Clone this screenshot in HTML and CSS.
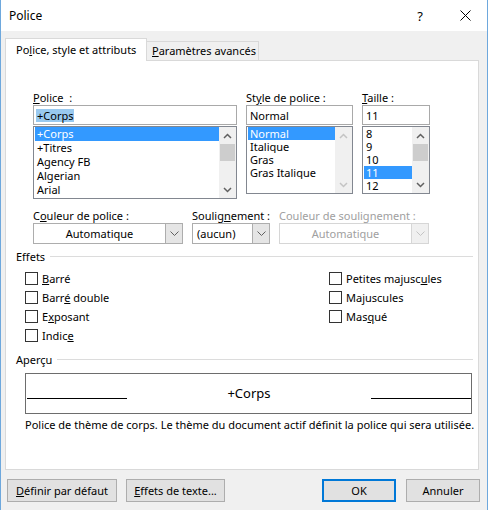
FILE: index.html
```html
<!DOCTYPE html>
<html lang="fr">
<head>
<meta charset="utf-8">
<title>Police</title>
<link rel="stylesheet" href="styles.css">
</head>
<body>
<div class="window">
  <div class="titlebar">
    <span class="title">Police</span>
    <span class="help">?</span>
    <span class="close"><svg width="11" height="11" viewBox="0 0 11 11"><path d="M0.5 0.5 L10.5 10.5 M10.5 0.5 L0.5 10.5" stroke="#000" stroke-width="1" fill="none"/></svg></span>
  </div>
  <div class="client">
    <div class="tabs">
      <div class="tab active">Po<u>l</u>ice, style et attributs</div>
      <div class="tab plain"><u>P</u>aramètres avancés</div>
    </div>
    <div class="panel">
      <div class="fontgrid">
        <div class="col">
          <span class="lbl"><u>P</u>olice&nbsp;&nbsp;:</span>
          <div class="input"><span class="hl">+Corps</span></div>
          <div class="list tall">
            <div class="items">
              <div class="item sel">+Corps</div>
              <div class="item">+Titres</div>
              <div class="item">Agency FB</div>
              <div class="item">Algerian</div>
              <div class="item">Arial</div>
            </div>
            <div class="scrollbar">
              <div class="sb-btn"><svg width="9" height="6" viewBox="0 0 9 6"><path d="M1 5 L4.5 1.5 L8 5" stroke="#606060" stroke-width="1.5" fill="none"/></svg></div>
              <div class="thumb"></div>
              <div class="track"></div>
              <div class="sb-btn"><svg width="9" height="6" viewBox="0 0 9 6"><path d="M1 1 L4.5 4.5 L8 1" stroke="#606060" stroke-width="1.5" fill="none"/></svg></div>
            </div>
          </div>
        </div>
        <div class="col">
          <span class="lbl">St<u>y</u>le de police :</span>
          <div class="input"><span class="txt">Normal</span></div>
          <div class="list small">
            <div class="items">
              <div class="item sel">Normal</div>
              <div class="item">Italique</div>
              <div class="item">Gras</div>
              <div class="item">Gras Italique</div>
            </div>
            <div class="scrollbar disabled">
              <div class="sb-btn"><svg width="9" height="6" viewBox="0 0 9 6"><path d="M1 5 L4.5 1.5 L8 5" stroke="#c4c4c4" stroke-width="1.5" fill="none"/></svg></div>
              <div class="track"></div>
              <div class="sb-btn"><svg width="9" height="6" viewBox="0 0 9 6"><path d="M1 1 L4.5 4.5 L8 1" stroke="#c4c4c4" stroke-width="1.5" fill="none"/></svg></div>
            </div>
          </div>
        </div>
        <div class="col">
          <span class="lbl"><u>T</u>aille :</span>
          <div class="input"><span class="txt">11</span></div>
          <div class="list small">
            <div class="items">
              <div class="item">8</div>
              <div class="item">9</div>
              <div class="item">10</div>
              <div class="item sel">11</div>
              <div class="item">12</div>
            </div>
            <div class="scrollbar">
              <div class="sb-btn"><svg width="9" height="6" viewBox="0 0 9 6"><path d="M1 5 L4.5 1.5 L8 5" stroke="#606060" stroke-width="1.5" fill="none"/></svg></div>
              <div class="thumb"></div>
              <div class="track"></div>
              <div class="sb-btn"><svg width="9" height="6" viewBox="0 0 9 6"><path d="M1 1 L4.5 4.5 L8 1" stroke="#606060" stroke-width="1.5" fill="none"/></svg></div>
            </div>
          </div>
        </div>
      </div>

      <div class="selects">
        <div class="col">
          <span class="lbl">C<u>o</u>uleur de police :</span>
          <div class="dd">
            <span class="dd-val">Automatique</span>
            <span class="dd-btn"><svg width="9" height="5" viewBox="0 0 9 5"><path d="M0.5 0.5 L4.5 4.5 L8.5 0.5" stroke="#606060" stroke-width="1" fill="none"/></svg></span>
          </div>
        </div>
        <div class="col">
          <span class="lbl">Soulig<u>n</u>ement :</span>
          <div class="dd left">
            <span class="dd-val">(aucun)</span>
            <span class="dd-btn"><svg width="9" height="5" viewBox="0 0 9 5"><path d="M0.5 0.5 L4.5 4.5 L8.5 0.5" stroke="#606060" stroke-width="1" fill="none"/></svg></span>
          </div>
        </div>
        <div class="col">
          <span class="lbl dim">Couleur de soulignement :</span>
          <div class="dd dis">
            <span class="dd-val">Automatique</span>
            <span class="dd-btn"><svg width="9" height="5" viewBox="0 0 9 5"><path d="M0.5 0.5 L4.5 4.5 L8.5 0.5" stroke="#c4c4c4" stroke-width="1" fill="none"/></svg></span>
          </div>
        </div>
      </div>

      <div class="ghead"><span>Effets</span><span class="rule"></span></div>
      <div class="effects">
        <div class="ecol left">
          <div class="cb"><span class="box"></span><span><u>B</u>arré</span></div>
          <div class="cb"><span class="box"></span><span>Barr<u>é</u> double</span></div>
          <div class="cb"><span class="box"></span><span>E<u>x</u>posant</span></div>
          <div class="cb"><span class="box"></span><span>Indic<u>e</u></span></div>
        </div>
        <div class="ecol">
          <div class="cb"><span class="box"></span><span>Petites majusc<u>u</u>les</span></div>
          <div class="cb"><span class="box"></span><span>Ma<u>j</u>uscules</span></div>
          <div class="cb"><span class="box"></span><span>Mas<u>q</u>ué</span></div>
        </div>
      </div>

      <div class="ghead second"><span>Aperçu</span><span class="rule"></span></div>
      <div class="preview">
        <span class="pline"></span>
        <span class="ptext">+Corps</span>
        <span class="pline"></span>
      </div>
      <p class="desc">Police de thème de corps. Le thème du document actif définit la police qui sera utilisée.</p>
    </div>

    <div class="buttons">
      <button class="btn b1"><u>D</u>éfinir par défaut</button>
      <button class="btn b2"><u>E</u>ffets de texte...</button>
      <button class="btn ok">OK</button>
      <button class="btn cancel">Annuler</button>
    </div>
  </div>
</div>
</body>
</html>
```
FILE: styles.css
```css
html, body {
  margin: 0;
  padding: 0;
}
body {
  width: 488px;
  height: 510px;
  overflow: hidden;
  font-family: "Noto Sans", "Open Sans", sans-serif;
  font-size: 11px;
  color: #000;
  background: #fff;
}
u {
  text-decoration: underline;
  text-underline-offset: 1px;
}
.window {
  height: 510px;
  box-sizing: border-box;
  border-left: 1px solid #6ea8dd;
  border-right: 1px solid #6ea8dd;
  display: flex;
  flex-direction: column;
}
.titlebar {
  height: 31px;
  flex: none;
  background: #fff;
  display: flex;
  align-items: center;
}
.title {
  margin-left: 8px;
  font-size: 12px;
}
.help {
  margin-left: auto;
  width: 46px;
  text-align: center;
  font-size: 13px;
}
.close {
  width: 44px;
  display: flex;
  justify-content: center;
  align-items: center;
}
.client {
  flex: 1;
  background: #f0f0f0;
  padding: 7px 8px 0 4px;
}
.tabs {
  display: flex;
  height: 22px;
  align-items: flex-start;
}
.tab {
  box-sizing: border-box;
  border: 1px solid #d9d9d9;
  border-bottom: none;
  white-space: nowrap;
}
.tab.active {
  position: relative;
  z-index: 1;
  width: 142px;
  height: 23px;
  background: #fff;
  padding-left: 10px;
  line-height: 22px;
}
.tab.plain {
  width: 112px;
  height: 19px;
  margin-top: 3px;
  border-left: none;
  background: #f0f0f0;
  padding-left: 5px;
  line-height: 18px;
}
.panel {
  height: 410px;
  box-sizing: border-box;
  border: 1px solid #d9d9d9;
  background: #fff;
  padding: 29px 5px 0 10px;
}
.fontgrid {
  display: grid;
  grid-template-columns: 204px 107px 68px;
  column-gap: 9px;
  margin-left: 17px;
  align-items: start;
}
.col {
  display: flex;
  flex-direction: column;
}
.lbl {
  display: block;
  height: 15px;
  line-height: 15px;
  white-space: nowrap;
}
.lbl.dim {
  color: #a0a0a0;
}
.input {
  height: 20px;
  box-sizing: border-box;
  border: 1px solid #a9a9a9;
  padding-left: 2px;
  display: flex;
  align-items: center;
}
.input .hl {
  background: #99c9ef;
  padding: 0 1px;
  line-height: 13px;
}
.input .txt {
  padding-left: 1px;
}
.list {
  margin-top: 1px;
  height: 68px;
  box-sizing: border-box;
  border: 1px solid #828790;
  display: flex;
  background: #fff;
}
.list.tall {
  height: 73px;
}
.items {
  flex: 1;
  padding-left: 1px;
  overflow: hidden;
}
.item {
  height: 14px;
  line-height: 14px;
  padding-left: 2px;
  white-space: nowrap;
  overflow: hidden;
}
.list.small .item {
  height: 13px;
  line-height: 13px;
}
.item.sel {
  background: #3399ff;
  color: #fff;
}
.scrollbar {
  width: 17px;
  flex: none;
  background: #f0f0f0;
  display: flex;
  flex-direction: column;
}
.sb-btn {
  height: 17px;
  flex: none;
  display: flex;
  align-items: center;
  justify-content: center;
}
.thumb {
  height: 17px;
  flex: none;
  margin: 0 1px;
  background: #cdcdcd;
}
.track {
  flex: 1;
}
.selects {
  display: grid;
  grid-template-columns: 150px 78px 150px;
  column-gap: 9px;
  margin: 9px 0 0 17px;
}
.dd {
  height: 21px;
  box-sizing: border-box;
  border: 1px solid #adadad;
  background: #fff;
  display: flex;
}
.dd-val {
  flex: 1;
  text-align: center;
  line-height: 19px;
  white-space: nowrap;
}
.dd.left .dd-val {
  text-align: left;
  padding-left: 4px;
}
.dd-btn {
  width: 16px;
  flex: none;
  border-left: 1px solid #adadad;
  background: #e5e5e5;
  display: flex;
  align-items: center;
  justify-content: center;
}
.dd.dis {
  border-color: #d6d6d6;
  color: #a0a0a0;
}
.dd.dis .dd-btn {
  border-left-color: #d6d6d6;
  background: #f0f0f0;
}
.ghead {
  display: flex;
  align-items: center;
  height: 15px;
  line-height: 15px;
  margin-top: 5px;
}
.ghead.second {
  margin-top: 7px;
}
.ghead .rule {
  flex: 1;
  height: 1px;
  background: #dcdcdc;
  margin-left: 5px;
}
.effects {
  display: flex;
  margin: 5px 0 0 9px;
}
.ecol {
  display: flex;
  flex-direction: column;
}
.ecol.left {
  width: 304px;
}
.cb {
  height: 19px;
  display: flex;
  align-items: center;
  gap: 4px;
  white-space: nowrap;
}
.box {
  width: 13px;
  height: 13px;
  box-sizing: border-box;
  border: 1px solid #333;
  background: #fff;
}
.preview {
  margin: 6px 0 0 9px;
  width: 447px;
  height: 41px;
  box-sizing: border-box;
  border: 1px solid #6d6d6d;
  display: flex;
  align-items: flex-start;
  padding-left: 1px;
}
.pline {
  width: 100px;
  height: 1px;
  margin-top: 24px;
  background: #000;
  flex: none;
}
.ptext {
  flex: 1;
  text-align: center;
  font-size: 13px;
  line-height: 18px;
  margin-top: 10px;
}
.desc {
  margin: 3px 0 0 9px;
  line-height: 15px;
  white-space: nowrap;
}
.buttons {
  display: flex;
  margin: 9px -1px 0 0;
  padding-left: 2px;
}
.btn {
  height: 23px;
  box-sizing: border-box;
  border: 1px solid #adadad;
  background: #e1e1e1;
  font-family: inherit;
  font-size: 11px;
  color: #000;
  line-height: 21px;
  padding: 0;
  text-align: center;
  white-space: nowrap;
}
.b1 {
  width: 110px;
}
.b2 {
  width: 99px;
  margin-left: 9px;
}
.ok {
  width: 74px;
  margin-left: auto;
  border: 2px solid #0078d7;
  line-height: 19px;
}
.cancel {
  width: 74px;
  margin-left: 10px;
}
```
